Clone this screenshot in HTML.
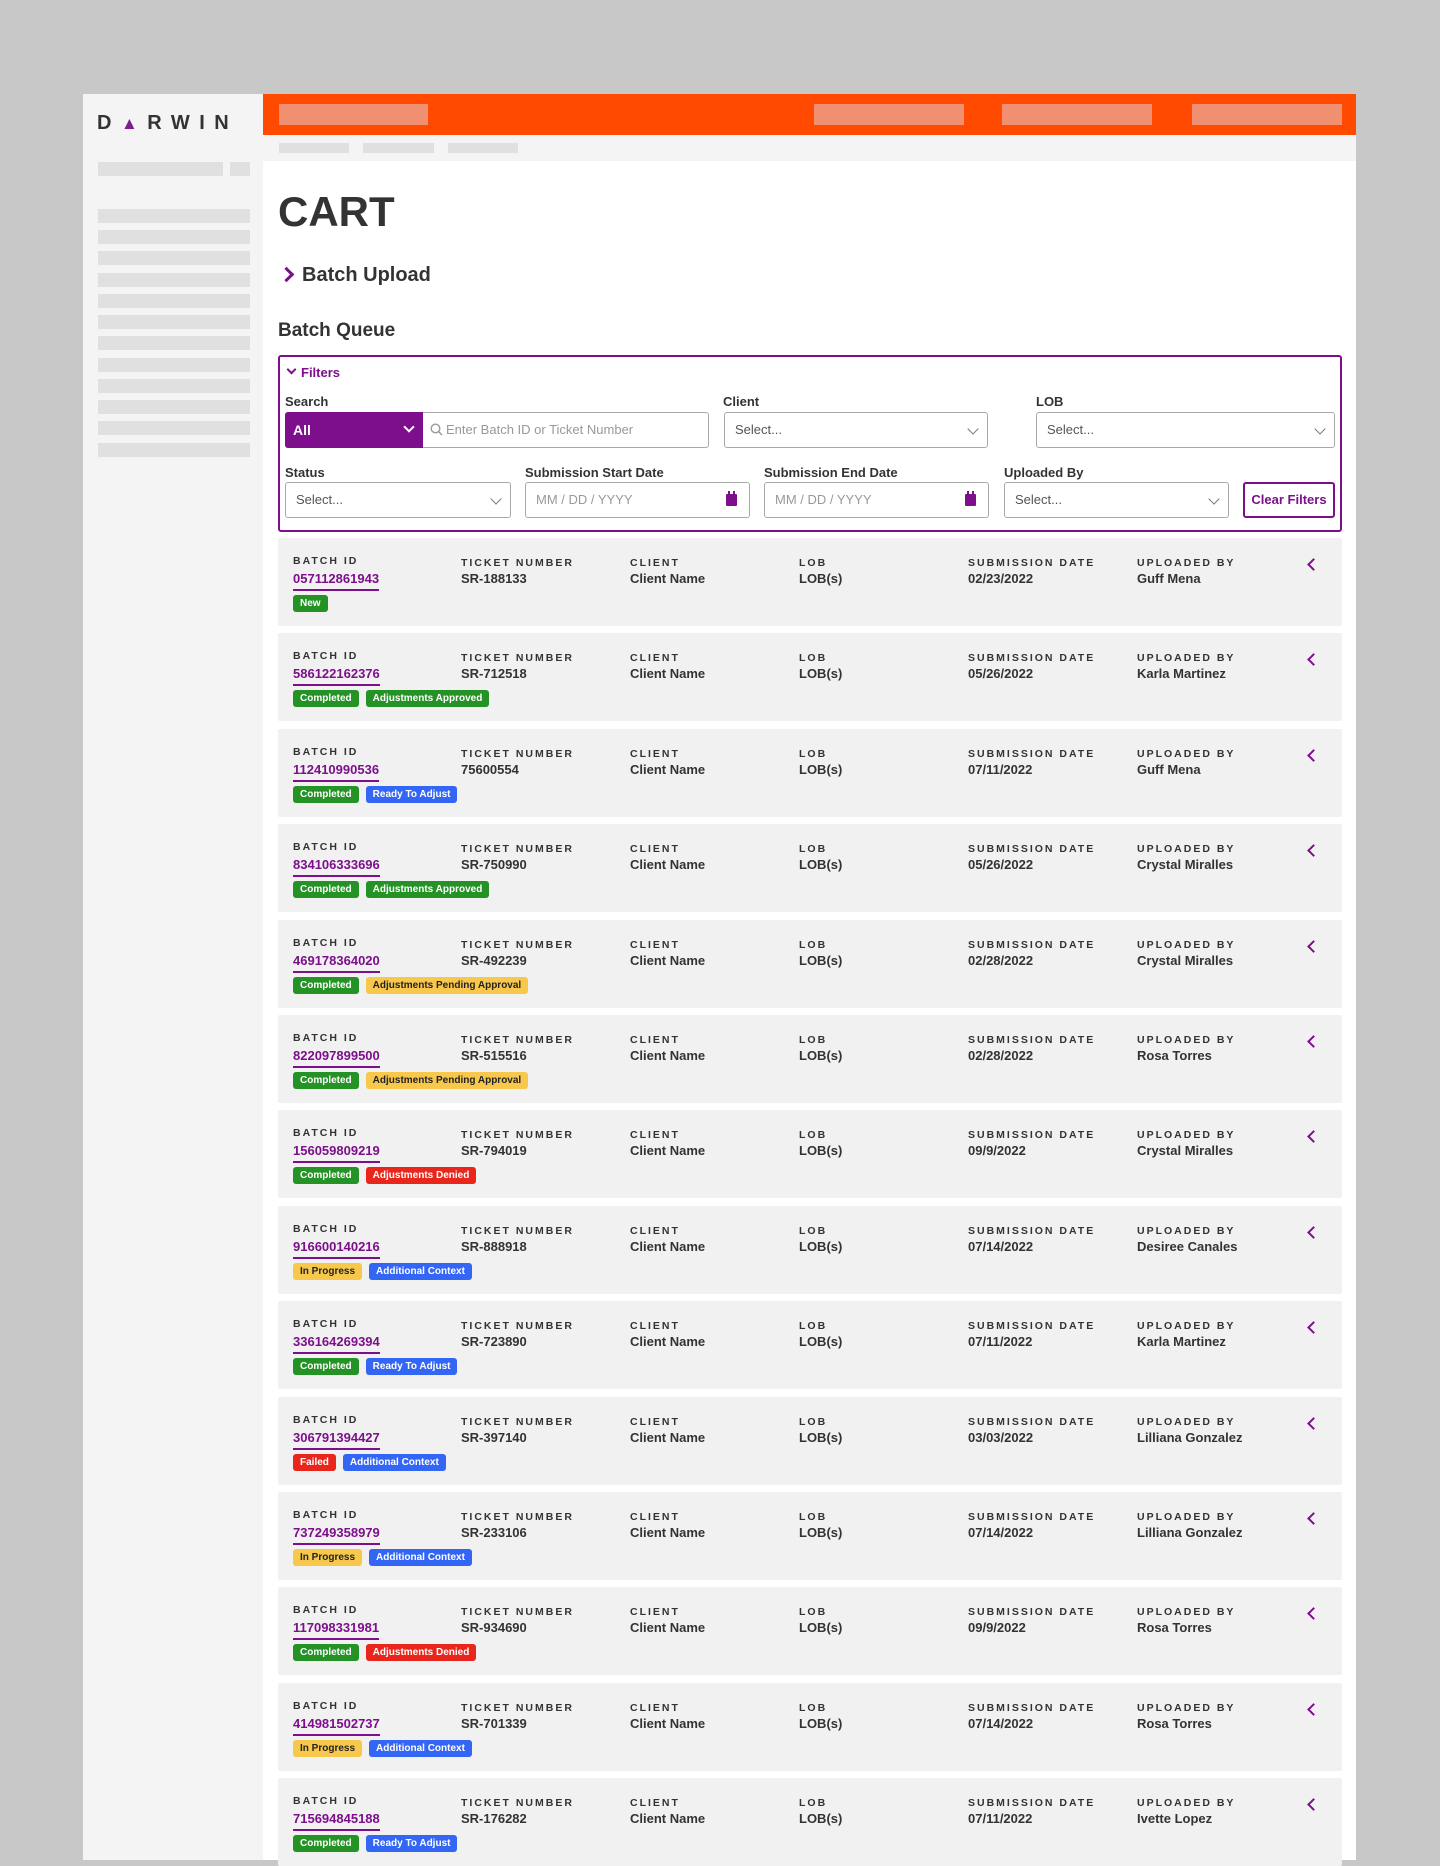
<!DOCTYPE html>
<html><head><meta charset="utf-8"><style>
*{box-sizing:border-box;margin:0;padding:0}
body{width:1440px;height:1860px;background:#c8c8c8;font-family:"Liberation Sans",Arial,sans-serif;position:relative;overflow:hidden;color:#333}
.a{position:absolute}
.ph{position:absolute;background:#e0e0e0}
.op{position:absolute;background:#f09070;top:104px;height:21px}
.lbl{position:absolute;font-size:13px;font-weight:bold;color:#333}
.fld{position:absolute;height:36px;border:1px solid #aaa;border-radius:3px;background:#fff;font-size:13px;color:#555;padding:0 10px;line-height:34px}
.fld .ch{position:absolute;right:10px;top:12px;width:8px;height:8px;border-right:1.5px solid #777;border-bottom:1.5px solid #777;transform:rotate(45deg)}
.fld .cal{position:absolute;right:12px;top:11px;width:11px;height:12px;background:#7d0f8c;border-radius:1px}
.fld .cal:before{content:"";position:absolute;left:2px;top:-3px;width:2px;height:4px;background:#7d0f8c;box-shadow:5px 0 #7d0f8c}
.ph2{color:#999}
.row{position:absolute;left:278px;width:1064px;height:88px;background:#f1f1f1;border-radius:2px}
.row .h{position:absolute;font-size:10.5px;font-weight:bold;letter-spacing:2px;color:#333}
.row .v{position:absolute;top:33px;font-size:13px;font-weight:bold;color:#333}
.row .id{color:#7d0f8c;border-bottom:2px solid #7d0f8c;padding-bottom:3px}
.bds{position:absolute;left:15px;top:57px;display:flex;gap:7px}
.bd{height:17px;border-radius:3px;font-size:10px;font-weight:bold;color:#fff;line-height:17px;padding:0 7px}
.g{background:#249225}.r{background:#e8261b}.y{background:#f7c84c;color:#222}.b{background:#3366f5}
.row .arr{position:absolute;left:1031px;top:22px;width:9px;height:9px;border-left:2.5px solid #7d0f8c;border-bottom:2.5px solid #7d0f8c;transform:rotate(45deg)}
</style></head><body>
<div class="a" style="left:83px;top:94px;width:1273px;height:1766px;background:#fff"></div>
<div class="a" style="left:83px;top:94px;width:180px;height:1766px;background:#f4f4f4"></div>
<div class="a" style="left:97px;top:112px;font-size:20px;font-weight:bold;letter-spacing:9.5px;color:#333">D<span style="color:#7d1f8c;font-size:17px">▲</span>RWIN</div>
<div class="ph" style="left:98px;top:162px;width:125px;height:14px"></div>
<div class="ph" style="left:230px;top:162px;width:20px;height:14px"></div>
<div class="ph" style="left:98px;top:209px;width:152px;height:14px"></div>
<div class="ph" style="left:98px;top:230px;width:152px;height:14px"></div>
<div class="ph" style="left:98px;top:251px;width:152px;height:14px"></div>
<div class="ph" style="left:98px;top:273px;width:152px;height:14px"></div>
<div class="ph" style="left:98px;top:294px;width:152px;height:14px"></div>
<div class="ph" style="left:98px;top:315px;width:152px;height:14px"></div>
<div class="ph" style="left:98px;top:336px;width:152px;height:14px"></div>
<div class="ph" style="left:98px;top:358px;width:152px;height:14px"></div>
<div class="ph" style="left:98px;top:379px;width:152px;height:14px"></div>
<div class="ph" style="left:98px;top:400px;width:152px;height:14px"></div>
<div class="ph" style="left:98px;top:421px;width:152px;height:14px"></div>
<div class="ph" style="left:98px;top:443px;width:152px;height:14px"></div>
<div class="a" style="left:263px;top:94px;width:1093px;height:41px;background:#ff4a00"></div>
<div class="op" style="left:279px;width:149px"></div>
<div class="op" style="left:814px;width:150px"></div>
<div class="op" style="left:1002px;width:150px"></div>
<div class="op" style="left:1192px;width:150px"></div>
<div class="a" style="left:263px;top:135px;width:1093px;height:26px;background:#f4f4f4"></div>
<div class="ph" style="left:279px;top:143px;width:70px;height:10px"></div>
<div class="ph" style="left:363px;top:143px;width:71px;height:10px"></div>
<div class="ph" style="left:448px;top:143px;width:70px;height:10px"></div>
<div class="a" style="left:278px;top:188px;font-size:42px;font-weight:bold;color:#333">CART</div>
<div class="a" style="left:281px;top:269px;width:11px;height:11px;border-right:3px solid #7d0f8c;border-top:3px solid #7d0f8c;transform:rotate(45deg)"></div>
<div class="a" style="left:302px;top:264px;font-size:20px;font-weight:bold;color:#333">Batch Upload</div>
<div class="a" style="left:278px;top:320px;font-size:19px;font-weight:bold;color:#333">Batch Queue</div>
<div class="a" style="left:278px;top:355px;width:1064px;height:177px;border:2px solid #7d0f8c;border-radius:3px"></div>
<div class="a" style="left:288px;top:366px;width:7px;height:7px;border-right:2px solid #7d0f8c;border-bottom:2px solid #7d0f8c;transform:rotate(45deg)"></div>
<div class="a" style="left:301px;top:365px;font-size:13px;font-weight:bold;color:#7d0f8c">Filters</div>
<div class="lbl" style="left:285px;top:394px">Search</div>
<div class="lbl" style="left:723px;top:394px">Client</div>
<div class="lbl" style="left:1036px;top:394px">LOB</div>
<div class="fld" style="left:285px;top:412px;width:424px"></div>
<div class="a" style="left:285px;top:412px;width:138px;height:36px;background:#7d0f8c;border-radius:3px 0 0 3px;color:#fff;font-weight:bold;font-size:14px;line-height:36px;padding-left:8px">All<span style="position:absolute;right:10px;top:11px;width:8px;height:8px;border-right:2px solid #fff;border-bottom:2px solid #fff;transform:rotate(45deg)"></span></div>
<svg class="a" style="left:430px;top:423px" width="13" height="13" viewBox="0 0 13 13"><circle cx="5.5" cy="5.5" r="4.3" fill="none" stroke="#999" stroke-width="1.4"/><path d="M8.6 8.6L12 12" stroke="#999" stroke-width="1.5"/></svg>
<div class="a ph2" style="left:446px;top:422px;font-size:13px">Enter Batch ID or Ticket Number</div>
<div class="fld" style="left:724px;top:412px;width:264px">Select...<span class="ch"></span></div>
<div class="fld" style="left:1036px;top:412px;width:299px">Select...<span class="ch"></span></div>
<div class="lbl" style="left:285px;top:465px">Status</div>
<div class="lbl" style="left:525px;top:465px">Submission Start Date</div>
<div class="lbl" style="left:764px;top:465px">Submission End Date</div>
<div class="lbl" style="left:1004px;top:465px">Uploaded By</div>
<div class="fld" style="left:285px;top:482px;width:226px">Select...<span class="ch"></span></div>
<div class="fld ph2" style="left:525px;top:482px;width:225px">MM / DD / YYYY<span class="cal"></span></div>
<div class="fld ph2" style="left:764px;top:482px;width:225px">MM / DD / YYYY<span class="cal"></span></div>
<div class="fld" style="left:1004px;top:482px;width:225px">Select...<span class="ch"></span></div>
<div class="a" style="left:1243px;top:482px;width:92px;height:36px;border:2px solid #7d0f8c;border-radius:3px;color:#7d0f8c;font-weight:bold;font-size:13px;line-height:32px;text-align:center">Clear Filters</div>
<div id="rows"></div>
<script>
var d=[["057112861943","SR-188133","02/23/2022","Guff Mena",[["New","g"]]],
["586122162376","SR-712518","05/26/2022","Karla Martinez",[["Completed","g"],["Adjustments Approved","g"]]],
["112410990536","75600554","07/11/2022","Guff Mena",[["Completed","g"],["Ready To Adjust","b"]]],
["834106333696","SR-750990","05/26/2022","Crystal Miralles",[["Completed","g"],["Adjustments Approved","g"]]],
["469178364020","SR-492239","02/28/2022","Crystal Miralles",[["Completed","g"],["Adjustments Pending Approval","y"]]],
["822097899500","SR-515516","02/28/2022","Rosa Torres",[["Completed","g"],["Adjustments Pending Approval","y"]]],
["156059809219","SR-794019","09/9/2022","Crystal Miralles",[["Completed","g"],["Adjustments Denied","r"]]],
["916600140216","SR-888918","07/14/2022","Desiree Canales",[["In Progress","y"],["Additional Context","b"]]],
["336164269394","SR-723890","07/11/2022","Karla Martinez",[["Completed","g"],["Ready To Adjust","b"]]],
["306791394427","SR-397140","03/03/2022","Lilliana Gonzalez",[["Failed","r"],["Additional Context","b"]]],
["737249358979","SR-233106","07/14/2022","Lilliana Gonzalez",[["In Progress","y"],["Additional Context","b"]]],
["117098331981","SR-934690","09/9/2022","Rosa Torres",[["Completed","g"],["Adjustments Denied","r"]]],
["414981502737","SR-701339","07/14/2022","Rosa Torres",[["In Progress","y"],["Additional Context","b"]]],
["715694845188","SR-176282","07/11/2022","Ivette Lopez",[["Completed","g"],["Ready To Adjust","b"]]]];
var h="";d.forEach(function(r,i){var t=538+i*95.4;
var cols=[[183,"TICKET NUMBER",r[1]],[352,"CLIENT","Client Name"],[521,"LOB","LOB(s)"],[690,"SUBMISSION DATE",r[2]],[859,"UPLOADED BY",r[3]]];
h+='<div class="row" style="top:'+t+'px"><div class="h" style="left:15px;top:17px">BATCH ID</div><div class="v id" style="left:15px">'+r[0]+'</div>';
cols.forEach(function(c){h+='<div class="h" style="left:'+c[0]+'px;top:19px">'+c[1]+'</div><div class="v" style="left:'+c[0]+'px">'+c[2]+'</div>';});
h+='<div class="bds">';r[4].forEach(function(b){h+='<div class="bd '+b[1]+'">'+b[0]+'</div>';});h+='</div>';
h+='<div class="arr"></div></div>';});
document.getElementById("rows").innerHTML=h;
</script>
</body></html>
